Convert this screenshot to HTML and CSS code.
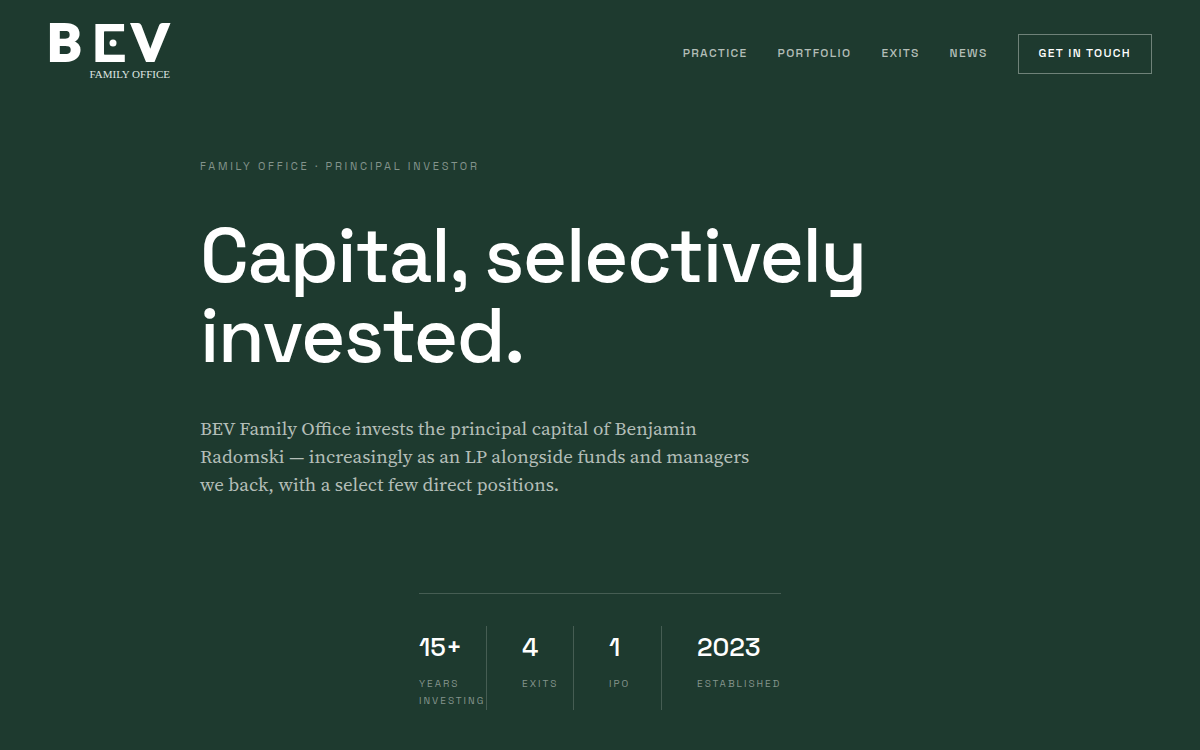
FILE: index.html
```html
<!DOCTYPE html>
<html lang="en">
<head>
  <meta charset="UTF-8">
  <meta name="viewport" content="width=device-width, initial-scale=1.0">
  <title>BEV Family Office</title>
  <link rel="stylesheet" href="styles.css">
</head>
<body>
  <header class="site-header">
    <a href="#" class="logo" aria-label="BEV Family Office">
      <svg width="124" height="62" viewBox="0 0 124 62">
        <g class="logo-letters">
          <text x="-1" y="38">B</text>
          <text class="logo-e" x="43" y="39">E</text>
          <text x="84" y="38">V</text>
        </g>
        <rect class="logo-gap" x="56" y="9" width="20" height="22"/>
        <circle class="logo-dot" cx="65" cy="20" r="3.5"/>
        <text class="logo-sub" x="122" y="55" text-anchor="end">FAMILY OFFICE</text>
      </svg>
    </a>
    <nav class="nav">
      <a href="#practice">Practice</a>
      <a href="#portfolio">Portfolio</a>
      <a href="#exits">Exits</a>
      <a href="#news">News</a>
      <a href="#contact" class="nav-cta">Get in touch</a>
    </nav>
  </header>

  <main>
    <section class="hero">
      <p class="eyebrow">Family Office · Principal Investor</p>
      <h1>Capital, selectively invested.</h1>
      <p class="lead">BEV Family Office invests the principal capital of Benjamin Radomski — increasingly as an LP alongside funds and managers we back, with a select few direct positions.</p>
    </section>

    <section class="stats">
      <div class="stat">
        <div class="stat-value">15+</div>
        <div class="stat-label">Years Investing</div>
      </div>
      <div class="stat">
        <div class="stat-value">4</div>
        <div class="stat-label">Exits</div>
      </div>
      <div class="stat">
        <div class="stat-value">1</div>
        <div class="stat-label">IPO</div>
      </div>
      <div class="stat">
        <div class="stat-value">2023</div>
        <div class="stat-label">Established</div>
      </div>
    </section>
  </main>
</body>
</html>
```
FILE: styles.css
```css
* {
  box-sizing: border-box;
  margin: 0;
  padding: 0;
}

body {
  background: #1e3a2f;
  color: #fff;
  font-family: 'Space Grotesk', Inter, sans-serif;
}

a {
  color: inherit;
  text-decoration: none;
}

.site-header {
  display: flex;
  justify-content: space-between;
  align-items: center;
  padding: 23px 48px;
}

.logo svg {
  display: block;
  overflow: visible;
}

.logo-letters {
  font-family: Lato, sans-serif;
  font-size: 52px;
  font-weight: 900;
  fill: #fff;
  stroke: #fff;
  stroke-width: 2px;
}

.logo-e {
  font-family: Montserrat, Lato, sans-serif;
  font-size: 54px;
  font-weight: 700;
  stroke: none;
}

.logo-gap {
  fill: #1e3a2f;
}

.logo-dot {
  fill: #fff;
}

.logo-sub {
  font-family: 'Liberation Serif', serif;
  font-size: 11px;
  fill: #dfe5e1;
}

.nav {
  display: flex;
  align-items: baseline;
  gap: 30px;
  font-size: 12px;
  font-weight: 500;
  letter-spacing: 0.11em;
  line-height: 18px;
  text-transform: uppercase;
  color: #b4beb8;
}

.nav-cta {
  padding: 9px 20px 11px;
  border: 1px solid #6f8279;
  color: #fff;
}

.hero {
  max-width: 800px;
  margin: 0 auto;
  padding-top: 49px;
}

.eyebrow {
  font-size: 11px;
  letter-spacing: 0.25em;
  line-height: 18px;
  text-transform: uppercase;
  color: #84948c;
}

h1 {
  margin-top: 41px;
  font-size: 76px;
  font-weight: 500;
  letter-spacing: -0.018em;
  line-height: 80px;
}

.lead {
  max-width: 560px;
  margin-top: 38px;
  font-family: 'Source Serif 4', 'Liberation Serif', serif;
  font-size: 19px;
  font-variation-settings: 'opsz' 14;
  line-height: 28px;
  color: #b4beb8;
}

.stats {
  display: grid;
  grid-template-columns: 68px 87px 88px 119px;
  width: fit-content;
  margin: 95px auto 0;
  padding: 32px 0 37px;
  border-top: 1px solid #465d53;
}

.stat {
  padding-left: 35px;
  padding-bottom: 1px;
  border-right: 1px solid #465d53;
}

.stat:first-child {
  padding-left: 0;
}

.stat:last-child {
  border-right: none;
}

.stat-value {
  font-size: 26px;
  font-weight: 500;
  line-height: 42px;
}

.stat-label {
  margin-top: 7px;
  font-size: 10px;
  letter-spacing: 0.2em;
  line-height: 17px;
  text-transform: uppercase;
  color: #84948c;
}
```
